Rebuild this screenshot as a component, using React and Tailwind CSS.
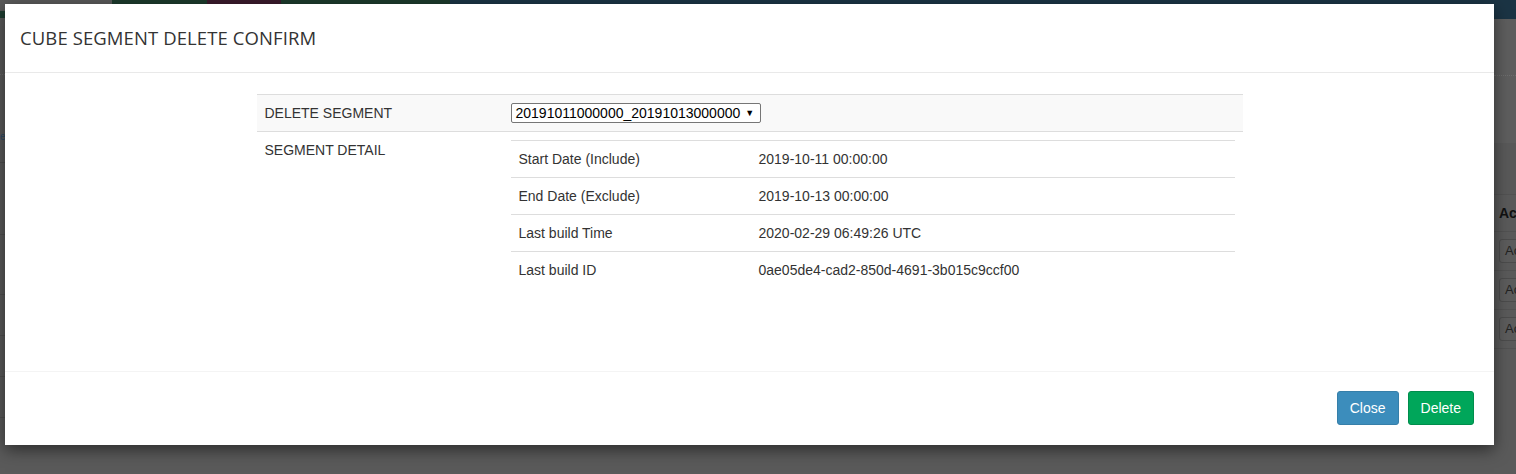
import React from 'react'

const details = [
  ['Start Date (Include)', '2019-10-11 00:00:00'],
  ['End Date (Exclude)', '2019-10-13 00:00:00'],
  ['Last build Time', '2020-02-29 06:49:26 UTC'],
  ['Last build ID', '0ae05de4-cad2-850d-4691-3b015c9ccf00'],
]

function Background() {
  return (
    <div className="flex flex-col w-full h-full">
      {/* top nav, mostly hidden by modal */}
      <div className="flex h-[19px] shrink-0">
        <div className="w-[112px] flex flex-col">
          <div className="h-[11px] bg-[#595959]"></div>
          <div className="h-[7px] bg-[#1e3d31]"></div>
        </div>
        <div className="w-[95px] bg-[#1c3a2c]"></div>
        <div className="w-[74px] bg-[#3a1a2c]"></div>
        <div className="w-[169px] bg-[#1c3a2c]"></div>
        <div className="flex-1 bg-[#1b3444]"></div>
      </div>
      <div className="flex flex-1">
        {/* left sliver */}
        <div className="w-[5px] flex flex-col">
          <div className="h-[56px] border-b border-dotted border-[#6a6a6a]"></div>
          <div className="h-[67px] flex items-end">
            <span className="text-[10px] leading-none text-[#2c4a66] font-['Liberation_Sans',sans-serif]">e</span>
          </div>
          <div className="h-[1px] bg-[#4d4d4d] mt-[20px]"></div>
          <div className="h-[72px] border-b border-[#4f4f4f]"></div>
          <div className="h-[60px] border-b border-[#4f4f4f]"></div>
          <div className="h-[41px] border-b border-[#4f4f4f]"></div>
          <div className="h-[41px] border-b border-[#4f4f4f]"></div>
          <div className="h-[41px] border-b border-[#4f4f4f]"></div>
          <div className="flex-1"></div>
        </div>
        <div className="flex-1"></div>
        {/* right sliver, page content behind the modal */}
        <div className="w-[22px] flex flex-col font-['Liberation_Sans',sans-serif]">
          <div className="h-[124px] bg-[#5e5e5e] flex flex-col">
            <div className="h-[57px] border-b border-dotted border-[#6e6e6e]"></div>
          </div>
          <div className="h-[52px] bg-[#595959] border-b border-[#525252]"></div>
          <div className="h-[37px] border-b border-[#525252] flex items-center pl-[5px]">
            <span className="text-[14px] font-bold text-[#111] whitespace-nowrap">Ac</span>
          </div>
          {[0, 1, 2].map((i) => (
            <div key={i} className="h-[39px] border-b border-[#525252] flex items-center pl-[5px]">
              <div className="h-[24px] w-[30px] shrink-0 rounded-[3px] border border-[#4c4c4c] bg-[#5c5c5c] text-[13px] text-[#222] pl-[5px] leading-[22px] whitespace-nowrap overflow-hidden">Ac</div>
            </div>
          ))}
          <div className="flex-1"></div>
        </div>
      </div>
    </div>
  )
}

export default function App() {
  return (
    <div className="relative w-[1516px] h-[474px] overflow-hidden bg-[#5a5a5a]">
      <Background />
      <div className="absolute left-[5px] top-[4px] w-[1489px] h-[441px] bg-white shadow-[0_5px_15px_rgba(0,0,0,0.5)] flex flex-col font-['Liberation_Sans',Arial,sans-serif] text-[#333]">
        <div className="h-[69px] shrink-0 border-b border-[#e9e9e9] flex items-center px-[15px]">
          <h4 className="text-[18.5px] text-[#333] font-['Open_Sans',sans-serif] tracking-[0.1px]">CUBE SEGMENT DELETE CONFIRM</h4>
        </div>
        <div className="h-[298px] shrink-0 pt-[21px]">
          <table className="mx-auto w-[986px] text-[14px] leading-[20px] border-collapse">
            <tbody>
              <tr className="bg-[#f9f9f9]">
                <td className="w-[246px] p-[8px] border-t border-[#ddd] align-top">DELETE SEGMENT</td>
                <td className="p-[8px] border-t border-[#ddd] align-top">
                  <div className="inline-flex items-center h-[20px] w-[250px] border border-[#767676] rounded-[2px] bg-white pl-[4px] text-[14px] leading-none text-black">
                    <span>20191011000000_20191013000000</span>
                    <span className="text-[9px] ml-[5px]">▼</span>
                  </div>
                </td>
              </tr>
              <tr>
                <td className="p-[8px] border-t border-[#ddd] align-top">SEGMENT DETAIL</td>
                <td className="p-[8px] border-t border-[#ddd] align-top">
                  <table className="w-full border-collapse">
                    <tbody>
                      {details.map(([k, v]) => (
                        <tr key={k}>
                          <td className="w-[240px] p-[8px] border-t border-[#ddd]">{k}</td>
                          <td className="p-[8px] border-t border-[#ddd]">{v}</td>
                        </tr>
                      ))}
                    </tbody>
                  </table>
                </td>
              </tr>
            </tbody>
          </table>
        </div>
        <div className="flex-1 border-t border-[#f4f4f4] flex justify-end items-start pt-[19px] pr-[20px] gap-[9px]">
          <button className="h-[34px] px-[12px] rounded-[3px] border border-[#367fa9] bg-[#3c8dbc] text-white text-[14px] leading-[20px]">Close</button>
          <button className="h-[34px] px-[12px] rounded-[3px] border border-[#008d4c] bg-[#00a65a] text-white text-[14px] leading-[20px]">Delete</button>
        </div>
      </div>
    </div>
  )
}
